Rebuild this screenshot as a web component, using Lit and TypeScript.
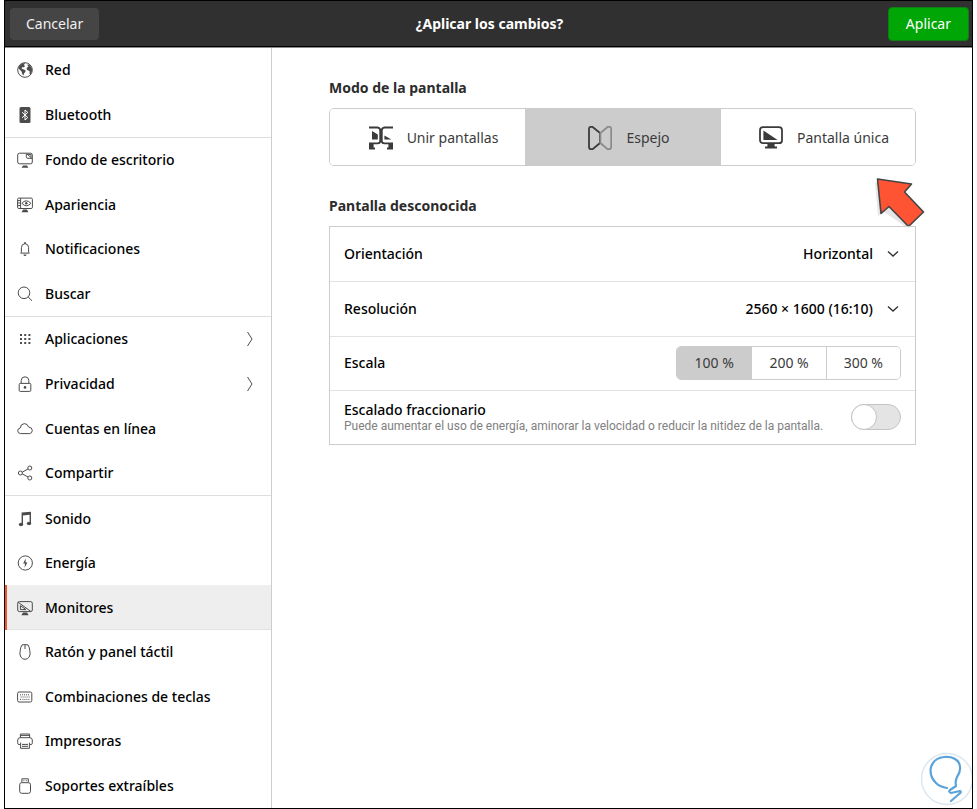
import { LitElement, html, css, svg, nothing } from "lit";
import { customElement, state } from "lit/decorators.js";
import { classMap } from "lit/directives/class-map.js";

const icons: Record<string, unknown> = {
  red: svg`<circle cx="8" cy="8" r="7.3"/><path class="fill" d="M2 4.5 5 1.6 8.2 1 7 3 8 4.2 6.2 5.6 5.2 5 4.6 6.4 6 7.2 8.2 8 8.6 9.6 7 11.4 6.4 13.6 5.2 12 4.6 9.4 2.6 7.6 1.4 6z M10 2.4 12.4 2.8 14.8 6 15 9 13.6 12.4 12.4 11.8 12.8 9.4 11.4 8.4 10 8 9.6 6 11.4 4.6z"/>`,
  bluetooth: svg`<rect class="fill" x="2.5" y="0" width="11" height="16" rx="1.5"/><path class="light" d="M5 5.2 10.8 10.6 8 13V3L10.8 5.4 5 10.8"/>`,
  fondo: svg`<rect x=".7" y="1.2" width="14.6" height="10.6" rx="1.8"/><path class="fill" d="M6 13.6h4l1.4 2.2H4.6z"/><path d="M9.3 1.5v3.2q0 1.6 1.6 1.6h4.2M10 2l4.6 4M11 2.4h3v3"/>`,
  apariencia: svg`<rect x=".6" y="1.1" width="14.8" height="10.4" rx="1.2"/><path d="M3.6 1.2v10.2M.8 3.6h2.6M.8 6h2.6M.8 8.6h2.6M4.9 6.3q4.2-5 9 0q-4.6 5-9 0z"/><circle class="fill" cx="9.3" cy="6.2" r="1.2"/><path class="fill" d="M6 12.6h4l1.4 2.6H4.6z"/>`,
  notificaciones: svg`<path d="M4.4 11.4V6.6Q4.4 3 8 2.6 11.6 3 11.6 6.6V11.4L12.4 12.1H3.6z"/><path class="fill" d="M7.3 1h1.4v2H7.3z M6.3 13.4h3.4q-.5 1.7-1.7 1.7t-1.7-1.7z"/>`,
  buscar: svg`<circle cx="7" cy="6.8" r="5.8"/><path d="M11.2 11 15 14.8"/>`,
  aplicaciones: svg`<path class="fill" d="M3 3h2v2H3zM7.2 3h2v2h-2zM11.4 3h2v2h-2zM3 7h2v2H3zM7.2 7h2v2h-2zM11.4 7h2v2h-2zM3 11h2v2H3zM7.2 11h2v2h-2zM11.4 11h2v2h-2z"/>`,
  privacidad: svg`<rect x="2.2" y="7.4" width="11.6" height="8" rx="1"/><path d="M4.2 7.2V4.4Q4.4.8 8 .8t3.8 3.6V7.2"/><circle class="fill" cx="8" cy="11.4" r="1.3"/>`,
  nube: svg`<path d="M3.6 12.6Q.7 12.2.7 9.8.8 7.4 3.2 7.1 3.6 3 7.2 2.6 10.6 2.6 11.6 6 15.2 6.4 15.3 9.4 15.2 12.3 12.6 12.6z"/>`,
  compartir: svg`<circle cx="3.4" cy="8" r="2"/><circle cx="12.8" cy="3" r="2"/><circle cx="12.8" cy="13" r="2"/><path d="M5.2 7.2 11 4M5.2 8.8 11 12"/>`,
  sonido: svg`<path class="fill" d="M4.6 1.6 14 .8V12.4H12.6V3.8L6 4.4V13.8H4.6z"/><ellipse class="fill" cx="4" cy="13.5" rx="2.2" ry="1.7"/><ellipse class="fill" cx="12" cy="12.5" rx="2.2" ry="1.7"/>`,
  energia: svg`<circle cx="8.3" cy="8" r="7.1"/><path class="fill" d="M8.6 3.4 6.2 8.6H8l-.4 4.2L10.4 7.4H8.6z"/>`,
  monitores: svg`<path d="M2.4 1.6H13.6Q15.3 1.6 15.3 3.2V10Q15.3 11.6 13.6 11.6H2.4Q.7 11.6.7 10V3.2Q.7 1.6 2.4 1.6zM1 2.2 13.8 11.4M3.4 5.6V9.6H9z"/><path class="fill" d="M6 12.4h4l1.6 2.8H4.4z"/>`,
  raton: svg`<path d="M5 .9Q8 .4 11 .9 12.4 2.6 12.8 6.8 13.8 10 12.2 13 10.6 15.3 8 15.3T3.8 13Q2.2 10 3.2 6.8 3.6 2.6 5 .9zM8 1V5"/>`,
  teclado: svg`<rect x=".6" y="3" width="14.2" height="10" rx="1.4"/><path class="dots" d="M3 5.8h10M3.6 8h9M3 10.4h1.4M5.4 10.4h5M11.4 10.4h1.4"/>`,
  impresora: svg`<path d="M3.4 4.6V1H12.6V4.6M3.4 2.4h9.2M3 11.6H1.8Q.7 11.6.7 9.8V7Q.9 4.8 3 4.7H13Q15.1 4.8 15.3 7V9.8Q15.3 11.6 14.2 11.6H13M3.6 9.6V15.3H12.4V9.6M5 11.4h6M5 13.3h6"/>`,
  usb: svg`<rect x="2.7" y="4.7" width="10.8" height="10.6" rx="2"/><path d="M4.9 4.4V.8H11.3V4.4M6.4 2.7h1M8.8 2.7h1"/>`,
};

interface Item { id: string; label: string; more?: boolean }

const groups: Item[][] = [
  [
    { id: "red", label: "Red" },
    { id: "bluetooth", label: "Bluetooth" },
  ],
  [
    { id: "fondo", label: "Fondo de escritorio" },
    { id: "apariencia", label: "Apariencia" },
    { id: "notificaciones", label: "Notificaciones" },
    { id: "buscar", label: "Buscar" },
  ],
  [
    { id: "aplicaciones", label: "Aplicaciones", more: true },
    { id: "privacidad", label: "Privacidad", more: true },
    { id: "nube", label: "Cuentas en línea" },
    { id: "compartir", label: "Compartir" },
  ],
  [
    { id: "sonido", label: "Sonido" },
    { id: "energia", label: "Energía" },
    { id: "monitores", label: "Monitores" },
    { id: "raton", label: "Ratón y panel táctil" },
    { id: "teclado", label: "Combinaciones de teclas" },
    { id: "impresora", label: "Impresoras" },
    { id: "usb", label: "Soportes extraíbles" },
  ],
];

const base = css`
  *, *::before, *::after { box-sizing: border-box; }
  button, select, input { font: inherit; color: inherit; margin: 0; }
  button, select, a { cursor: pointer; }
  svg { display: block; flex: none; }
  svg * { fill: none; stroke: currentColor; }
  svg .fill { fill: currentColor; stroke: none; }
`;

@customElement("settings-sidebar")
class SettingsSidebar extends LitElement {
  @state() private current = "monitores";

  static styles = [base, css`
    :host { display: flex; border-right: 1px solid #cdcdcd; }
    .nav { flex: 1; display: flex; flex-direction: column; }
    .group { flex: 1 0 auto; display: flex; flex-direction: column; list-style: none; margin: 0; padding: 0; }
    .group + .group { border-top: 1px solid #dedede; }
    .pair { flex-grow: 2; }
    .four { flex-grow: 4; }
    .seven { flex-grow: 7; }
    .entry { flex: 1 0 44px; display: flex; }
    .link {
      flex: 1; display: flex; align-items: center; gap: 12px;
      padding: 0 17px 0 10px; border-left: 2px solid transparent;
      color: #000; font-weight: 500; text-decoration: none; white-space: nowrap;
    }
    .current { background: #eee; border-left-color: #f0532f; box-shadow: inset 0 -1px #e2e2e2; }
    .icon { color: #4c4c4c; }
    .label { flex: 1; }
    .light { stroke: #fff; }
    .dots { stroke-dasharray: 1 1; }
  `];

  render() {
    return html`<nav class="nav" aria-label="Configuración">
      ${groups.map((g) => html`<ul class=${classMap({ group: true, pair: g.length === 2, four: g.length === 4, seven: g.length === 7 })}>
        ${g.map((i) => html`<li class="entry">
          <a class=${classMap({ link: true, current: i.id === this.current })} href="#${i.id}"
            aria-current=${i.id === this.current ? "page" : nothing}
            @click=${() => (this.current = i.id)}>
            <svg class="icon" width="16" height="16" viewBox="0 0 16 16" aria-hidden="true">${icons[i.id]}</svg>
            <span class="label">${i.label}</span>
            ${i.more ? html`<svg class="icon" width="8" height="16" viewBox="0 0 8 16" aria-hidden="true"><path d="M1.5 1 6 8 1.5 15"/></svg>` : nothing}
          </a>
        </li>`)}
      </ul>`)}
    </nav>`;
  }
}

const modes = [
  {
    id: "unir", label: "Unir pantallas",
    art: svg`<path class="mid" d="M0 1.5H8.5Q11.2 1.8 11.2 4.4V15Q11.2 17.3 8.5 17.4H0M24 1.5H15.5Q12.8 1.8 12.8 4.4V15Q12.8 17.3 15.5 17.4H24"/><path class="fill" d="M3 5 8.8 8.4V13.4H3z M15.4 9.4 22.4 13.4H15.4z M0 17H4.6V21.4H6V23.4H0z M24 17H19.4V21.4H18V23.4H24z"/>`,
  },
  {
    id: "espejo", label: "Espejo",
    art: svg`<path class="mid" d="M1 3Q1 .8 3 .8H4.4L12 7V17L4.6 23.2H3Q1 23.2 1 21z"/><path class="faded" d="M23.2 3Q23.2.8 21.2.8H19.8L12.4 7V17L19.6 23.2H21.2Q23.2 23.2 23.2 21z"/>`,
  },
  {
    id: "unica", label: "Pantalla única",
    art: svg`<rect class="mid" x="1" y="1.2" width="22" height="16" rx="3"/><path class="fill" d="M4.4 4.4 18.6 14H4.4z M8.4 17.4H15.6V20.4H18V22.4H6V20.4H8.4z"/>`,
  },
];

@customElement("app-root")
class AppRoot extends LitElement {
  @state() private mode = "espejo";
  @state() private scale = 100;

  static styles = [base, css`
    :host {
      display: block; padding: 0 4px; background: #fff; color: #000;
      font: 14px/20px "Noto Sans", "Open Sans", sans-serif;
    }
    .window {
      position: relative; display: flex; flex-direction: column;
      min-height: 100vh; border: 1px solid #000; overflow: hidden;
    }
    .bar {
      display: grid; grid-template-columns: 1fr auto 1fr; align-items: center;
      min-height: 46px; padding: 0 3px 0 5px;
      background: #303030; color: #fff; border-bottom: 1px solid #000;
    }
    .title { margin: 0; font-size: 14px; font-weight: 700; }
    .action { justify-self: start; height: 32px; padding: 0 16px; border: 0; border-radius: 4px; background: #454545; color: #f0f0f0; }
    .apply { justify-self: end; height: 34px; padding: 0 17px; background: #00a605; border: 1px solid #0d7d14; color: #fff; }
    .body { flex: 1; display: grid; grid-template-columns: 267px minmax(0, 1fr); border-top: 1px solid #8a8a8a; }
    .main { padding: 30px 56px 40px 57px; }
    .section { position: relative; }
    .heading { margin: 0 0 10px; font-size: 14px; line-height: 20px; font-weight: 700; color: #2c2c2c; }
    .segments {
      display: grid; grid-auto-flow: column; grid-auto-columns: 1fr;
      border: 1px solid #ccc; border-radius: 5px; overflow: hidden;
    }
    .segment {
      display: flex; align-items: center; justify-content: center; gap: 14px;
      border: 0; padding: 0; background: #fff; color: #3b3b3b; white-space: nowrap;
    }
    .segment + .segment { border-left: 1px solid #ccc; }
    .big { height: 56px; padding: 2px 0 0 12px; }
    .on { background: #ccc; }
    .small { height: 32px; padding: 0 17px; }
    .mid { stroke-width: 1.8; }
    .faded { stroke: #8b8b8b; stroke-width: 1.8; }
    .devices { margin-top: 30px; }
    .card { display: grid; grid-template-columns: minmax(0, 1fr); grid-auto-rows: 1fr; min-height: 219px; border: 1px solid #ccc; font-weight: 500; }
    .row { display: flex; align-items: center; justify-content: space-between; gap: 8px; padding: 0 14px; }
    .row + .row { border-top: 1px solid #e2e2e2; }
    .picker { display: grid; align-items: center; }
    .select {
      grid-area: 1 / 1; appearance: none; border: 0; background: transparent;
      padding: 0 28px 0 0; text-align-last: right; field-sizing: content;
    }
    .chevron { grid-area: 1 / 1; justify-self: end; margin-right: 2px; pointer-events: none; color: #333; }
    .small, .hint { font-weight: 400; }
    .detail { display: flex; flex-direction: column; min-width: 0; }
    .name { line-height: 18px; }
    .hint { font-family: Roboto, "Noto Sans", sans-serif; font-size: 12px; line-height: 14px; color: #808080; white-space: nowrap; }
    .switch {
      appearance: none; flex: none; display: flex; width: 50px; height: 26px;
      border: 1px solid #c4c4c4; border-radius: 13px; background: #e4e4e4; cursor: pointer;
    }
    .switch::before {
      content: ""; width: 26px; height: 26px; margin: -1px; border-radius: 50%;
      background: #fff; border: 1px solid #c4c4c4;
    }
    .switch:checked { background: #00a605; justify-content: flex-end; }
    .arrow { position: absolute; top: 98px; right: -10px; pointer-events: none; }
    .arrow .shade { fill: #e6e6e6; stroke: none; }
    .arrow .head { fill: #ff5434; stroke: #444; stroke-width: 1.6; stroke-linejoin: round; }
    .mark { position: absolute; right: -2px; bottom: 2px; pointer-events: none; }
    .mark .ring { stroke: #dce7f1; stroke-width: 1.5; }
    .mark .bulb { stroke: #5ba3d9; stroke-width: 2.2; stroke-linecap: round; stroke-linejoin: round; }
  `];

  private picker(id: string, options: string[]) {
    return html`<span class="picker">
      <select class="select" id=${id}>${options.map((o) => html`<option>${o}</option>`)}</select>
      <svg class="chevron" width="12" height="8" viewBox="0 0 12 8" aria-hidden="true"><path stroke-width="1.4" d="M1 1.5 6 6 11 1.5"/></svg>
    </span>`;
  }

  render() {
    return html`<div class="window">
      <header class="bar">
        <button class="action">Cancelar</button>
        <h1 class="title">¿Aplicar los cambios?</h1>
        <button class="action apply">Aplicar</button>
      </header>
      <div class="body">
        <settings-sidebar></settings-sidebar>
        <main class="main">
          <section class="section">
            <h2 class="heading">Modo de la pantalla</h2>
            <div class="segments" role="group" aria-label="Modo de la pantalla">
              ${modes.map((m) => html`<button
                class=${classMap({ segment: true, big: true, on: m.id === this.mode })}
                aria-pressed=${m.id === this.mode} @click=${() => (this.mode = m.id)}>
                <svg width="24" height="24" viewBox="0 0 24 24" aria-hidden="true">${m.art}</svg>
                <span>${m.label}</span>
              </button>`)}
            </div>
            <svg class="arrow" width="52" height="52" viewBox="0 0 52 52" aria-hidden="true">
              <path class="shade" d="M1 6 4 40 10 36 32 51 36 48 14 8z"/>
              <path class="head" d="M3.5 3 37.5 8 30.5 16 49.5 36 34.5 50.5 15 30.5 7 37.5z"/>
            </svg>
          </section>
          <section class="section devices">
            <h2 class="heading">Pantalla desconocida</h2>
            <div class="card">
              <div class="row"><label for="orientation">Orientación</label>${this.picker("orientation", ["Horizontal"])}</div>
              <div class="row"><label for="resolution">Resolución</label>${this.picker("resolution", ["2560 × 1600 (16:10)"])}</div>
              <div class="row">
                <span id="scale">Escala</span>
                <div class="segments" role="group" aria-labelledby="scale">
                  ${[100, 200, 300].map((s) => html`<button
                    class=${classMap({ segment: true, small: true, on: s === this.scale })}
                    aria-pressed=${s === this.scale} @click=${() => (this.scale = s)}>${s} %</button>`)}
                </div>
              </div>
              <div class="row">
                <label class="detail" for="fractional">
                  <span class="name">Escalado fraccionario</span>
                  <span class="hint">Puede aumentar el uso de energía, aminorar la velocidad o reducir la nitidez de la pantalla.</span>
                </label>
                <input class="switch" id="fractional" type="checkbox" role="switch">
              </div>
            </div>
          </section>
        </main>
      </div>
      <svg class="mark" width="54" height="54" viewBox="0 0 54 54" aria-hidden="true">
        <circle class="ring" cx="27" cy="27" r="25.5"/>
        <path class="bulb" d="M27 36Q20 35 16 31 9 24 11 15 14 6 24 5 35 4 39 11 42 18 37 25 35 29 36 34L30 38Q28 40 31 41L40 39Q42 40 39 42L31 49"/>
      </svg>
    </div>`;
  }
}
